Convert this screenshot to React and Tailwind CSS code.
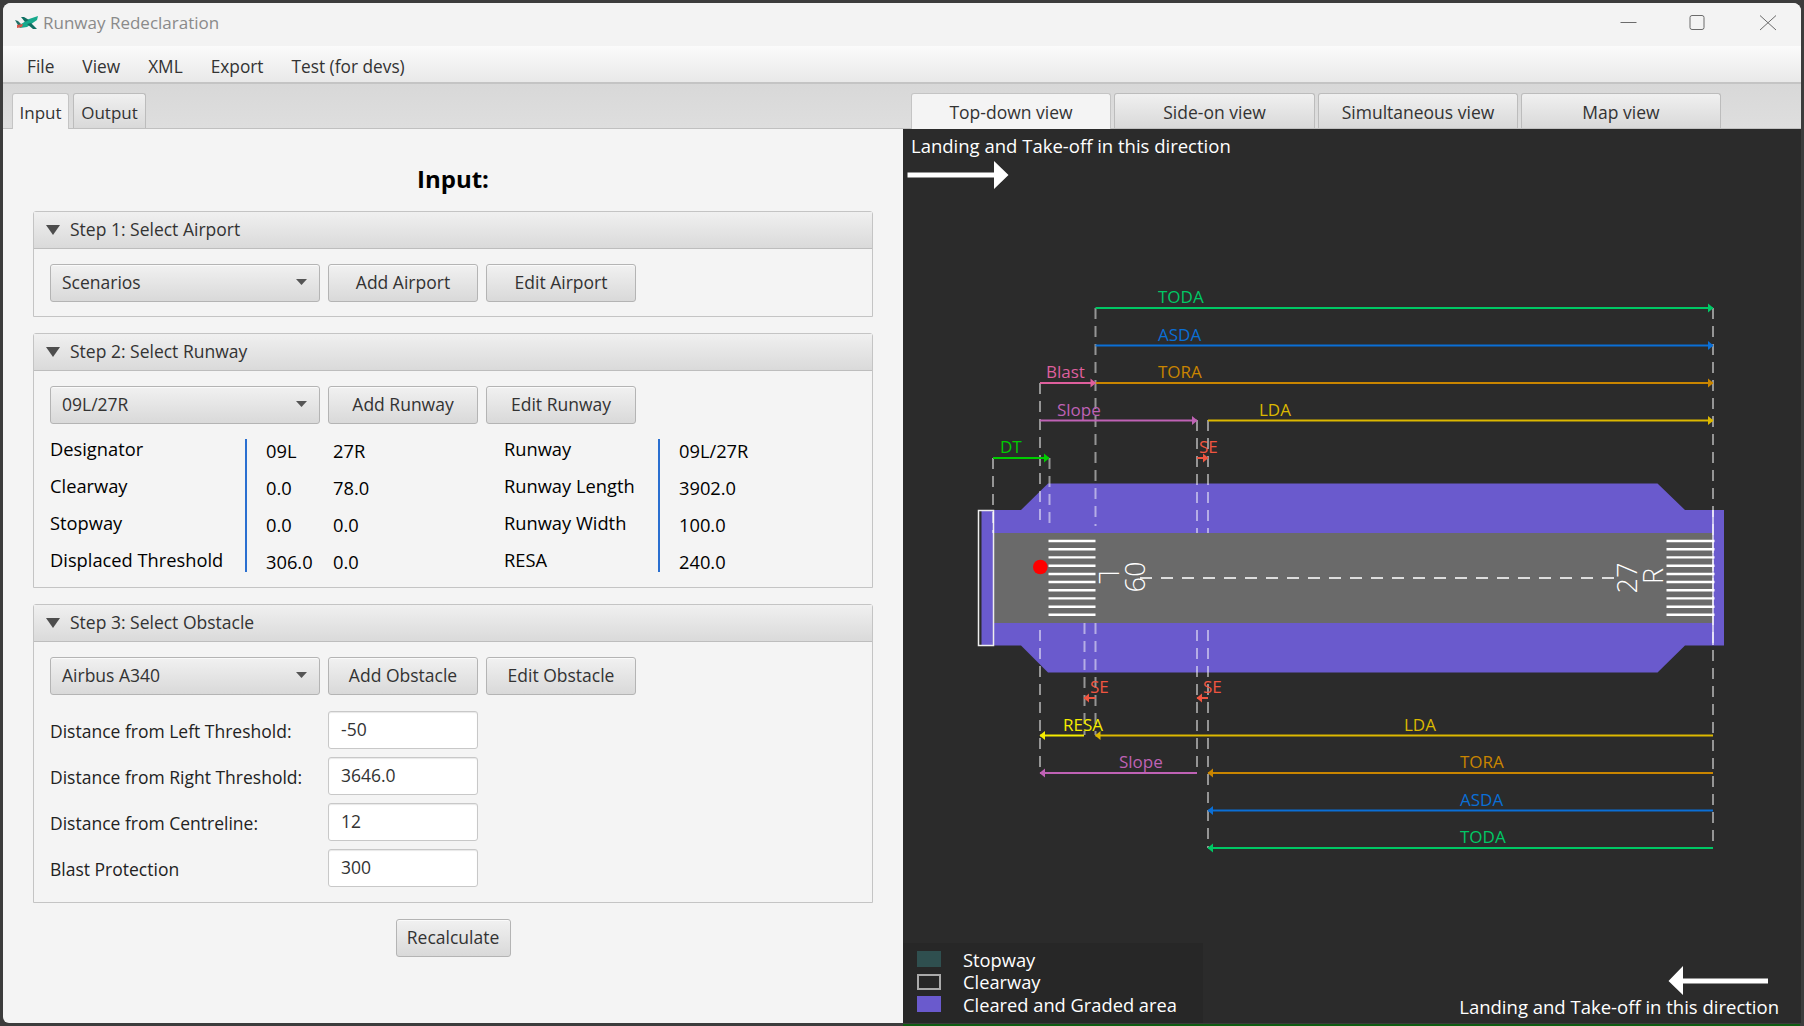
import React from "react";

const btn =
  "h-[38px] pb-[2px] rounded-[3px] border border-[#b4b4b4] bg-gradient-to-b from-[#f1f1f1] to-[#d9d9d9] text-[#333] flex items-center justify-center shadow-[inset_0_1px_0_#fafafa]";

function Combo({ label }) {
  return (
    <div className={`${btn} w-[270px] !justify-between pl-[11px] pr-[12px]`}>
      <span>{label}</span>
      <svg width="11" height="6" viewBox="0 0 11 6">
        <polygon points="0,0 11,0 5.5,6" fill="#555" />
      </svg>
    </div>
  );
}

function Controls({ combo, a, b }) {
  return (
    <div className="flex gap-[8px]">
      <Combo label={combo} />
      <div className={`${btn} w-[150px]`}>{a}</div>
      <div className={`${btn} w-[150px]`}>{b}</div>
    </div>
  );
}

function Pane({ title, pad = "pb-[15px]", children }) {
  return (
    <div className="border border-[#c4c4c4] rounded-t-[3px]">
      <div className="h-[36px] flex items-center pl-[12px] gap-[10px] border-b border-[#bdbdbd] bg-gradient-to-b from-[#f0f0f0] to-[#dadada] text-[#333] box-content">
        <svg width="14" height="10" viewBox="0 0 14 10">
          <polygon points="0,0 14,0 7,10" fill="#4d4d4d" />
        </svg>
        <span className="pb-[2px]">{title}</span>
      </div>
      <div className={`pl-[16px] pt-[15px] ${pad}`}>{children}</div>
    </div>
  );
}

function Col({ items, className, lead = "leading-[20px]" }) {
  return (
    <div className={`flex flex-col gap-[15px] text-black text-[18.3px] ${className}`}>
      {items.map((t, i) => (
        <div key={i} className={`h-[22px] ${lead}`}>
          {t}
        </div>
      ))}
    </div>
  );
}

function Field({ label, value }) {
  return (
    <div className="flex items-center h-[38px]">
      <div className="w-[278px] text-[#222] pt-[2px]">{label}</div>
      <div className="w-[150px] h-[38px] pb-[2px] rounded-[3px] border border-[#c8c8c8] bg-white pl-[12px] flex items-center text-[#333] shadow-[inset_0_1px_1px_#e8e8e8]">
        {value}
      </div>
    </div>
  );
}

const GREEN = "#00c765";
const BLUE = "#0a6fd6";
const ORANGE = "#c98500";
const PINK = "#df5f9d";
const VIOLET = "#bf62b5";
const YELLOW = "#dcb800";
const RED = "#ef5540";

// x1, x2, y, colour, arrow side, label, label x
const spans = [
  [1095.5, 1713, 308, GREEN, "r", "TODA", 1158],
  [1095.5, 1713, 345.5, BLUE, "r", "ASDA", 1158],
  [1095.5, 1713, 383, ORANGE, "r", "TORA", 1158],
  [1040, 1095.5, 383, PINK, "r", "Blast", 1046],
  [1040, 1197, 420.5, VIOLET, "r", "Slope", 1057],
  [1208, 1713, 420.5, YELLOW, "r", "LDA", 1259],
  [993, 1049, 458, "#00cc00", "r", "DT", 1000],
  [1197, 1208, 458, RED, "r", "SE", 1199],
  [1084, 1095.5, 698, RED, "l", "SE", 1090],
  [1197, 1208, 698, RED, "l", "SE", 1203],
  [1040, 1084, 735.5, "#f5ec00", "l", "RESA", 1063],
  [1095.5, 1713, 735.5, YELLOW, "l", "LDA", 1404],
  [1040, 1197, 773, VIOLET, "l", "Slope", 1119],
  [1208, 1713, 773, ORANGE, "l", "TORA", 1460],
  [1208, 1713, 810.5, BLUE, "l", "ASDA", 1460],
  [1208, 1713, 848, GREEN, "l", "TODA", 1460],
];

// x, y1, y2
const dashes = [
  [993, 458, 533],
  [1040, 383, 526],
  [1049.5, 458, 526],
  [1095.5, 308, 526],
  [1197, 420, 533],
  [1208, 420, 533],
  [1713, 308, 848],
  [1040, 630, 773],
  [1084.5, 623, 735],
  [1095.5, 623, 735],
  [1197, 630, 773],
  [1208, 630, 848],
];

const stripes = [541, 549.3, 557.4, 565.7, 574, 582, 590.3, 598.4, 606.7, 614.8];

function Diagram() {
  return (
    <svg className="absolute inset-0" width="898" height="894" viewBox="903 129 898 894">
      <polygon
        points="981.5,510 1021,510 1048,483.5 1657.5,483.5 1685,510 1724,510 1724,645.5 1685,645.5 1657.5,672.5 1048,672.5 1021,645.5 981.5,645.5"
        fill="#6a5acd"
      />
      <rect x="993.5" y="533" width="719.5" height="90" fill="#6a6a6a" />
      <rect x="978.5" y="510.5" width="15" height="135" fill="none" stroke="#eee" strokeWidth="1.5" />
      <line x1="1713" x2="1713" y1="510" y2="645" stroke="#e8e4f8" strokeWidth="1.5" />
      {stripes.map((y) => (
        <g key={y} stroke="#fff" strokeWidth="2.4">
          <line x1="1048.5" x2="1095.5" y1={y} y2={y} />
          <line x1="1666.5" x2="1714.5" y1={y} y2={y} />
        </g>
      ))}
      <line x1="1140" x2="1614" y1="578" y2="578" stroke="#ddd" strokeWidth="2" strokeDasharray="12 9" />
      <circle cx="1040.3" cy="567" r="7.3" fill="#ff0000" />
      <g fill="#fff" fontFamily='"Open Sans", sans-serif' fontSize="27" fontWeight="300" textAnchor="middle">
        <text transform="translate(1099 577) rotate(90)">L</text>
        <text transform="translate(1125 577) rotate(90)">09</text>
        <text transform="translate(1637 578) rotate(-90)">27</text>
        <text transform="translate(1663 576) rotate(-90)">R</text>
      </g>
      {dashes.map(([x, y1, y2], i) => (
        <line
          key={i}
          x1={x}
          x2={x}
          y1={y1}
          y2={y2}
          stroke="#fff"
          strokeOpacity="0.5"
          strokeWidth="2"
          strokeDasharray="11 7"
        />
      ))}
      {spans.map(([x1, x2, y, c, side, label, lx], i) => (
        <g key={i}>
          <line x1={x1} x2={x2} y1={y} y2={y} stroke={c} strokeWidth="2" />
          {side === "r" ? (
            <polygon points={`${x2 + 0.5},${y} ${x2 - 5},${y - 4.5} ${x2 - 5},${y + 4.5}`} fill={c} />
          ) : (
            <polygon points={`${x1 - 0.5},${y} ${x1 + 5},${y - 4.5} ${x1 + 5},${y + 4.5}`} fill={c} />
          )}
          <text x={lx} y={y - 5} fill={c} fontFamily='"Open Sans", sans-serif' fontSize="17">
            {label}
          </text>
        </g>
      ))}
      <polygon
        points="907.5,172.5 994,172.5 994,161 1008.5,175 994,189 994,177.5 907.5,177.5"
        fill="#fff"
      />
      <polygon
        points="1768,978.5 1683,978.5 1683,966 1668.5,981 1683,995 1683,983.5 1768,983.5"
        fill="#fff"
      />
    </svg>
  );
}

export default function App() {
  return (
    <div
      className="relative w-[1804px] h-[1026px] bg-[#3c3c3c] p-[3px] overflow-hidden text-[17.5px]"
      style={{ fontFamily: '"Open Sans", "Noto Sans", sans-serif' }}
    >
      <div className="w-full h-full flex flex-col rounded-t-[8px] rounded-bl-[6px] overflow-hidden bg-[#f4f4f4]">
        {/* title bar */}
        <div className="h-[43px] shrink-0 bg-[#f3f3f3] flex items-center pb-[3px]">
          <svg className="ml-[12px] mr-[4px]" width="24" height="14" viewBox="0 0 24 14">
            <polygon points="0,4 3,5 7,9 4,11" fill="#1f6f66" />
            <polygon points="3,10 14,3 23,0 22,4 12,11 5,12" fill="#17a98c" />
            <polygon points="6,1 9,1 14,4 10,6" fill="#0f6f62" />
            <polygon points="12,8 16,7 22,13 18,13" fill="#0f6f62" />
            <polygon points="2,9 8,8 7,11 2,12" fill="#d9554a" />
          </svg>
          <span className="text-[#8a8a8a] text-[17px]">Runway Redeclaration</span>
          <svg className="ml-auto mr-[24px]" width="157" height="16" viewBox="0 0 157 16" fill="none" stroke="#6b6b6b" strokeWidth="1">
            <line x1="0.5" x2="16.5" y1="7.5" y2="7.5" />
            <rect x="70" y="0.5" width="14" height="14" rx="2" />
            <line x1="140" x2="156" y1="0.5" y2="15" />
            <line x1="156" x2="140" y1="0.5" y2="15" />
          </svg>
        </div>

        {/* menu bar */}
        <div className="h-[38px] shrink-0 flex items-center gap-[28px] pl-[24px] pt-[5px] text-[#333] text-[17.3px] border-b-2 border-[#c4c4c4] bg-gradient-to-b from-[#fbfbfb] to-[#e9e9e9]">
          <span>File</span>
          <span>View</span>
          <span>XML</span>
          <span>Export</span>
          <span>Test (for devs)</span>
        </div>

        <div className="flex-1 flex min-h-0">
          {/* input side */}
          <div className="w-[900px] shrink-0 flex flex-col">
            <div className="h-[45px] shrink-0 flex items-end gap-[4px] pl-[9px] bg-gradient-to-b from-[#d8d8d8] to-[#dedede] border-b border-[#c0c0c0] text-[17px]">
              <div className="w-[57px] h-[36px] -mb-px pt-[2px] flex items-center justify-center rounded-t-[3px] border border-b-0 border-[#c4c4c4] bg-[#f4f4f4] text-[#333]">
                Input
              </div>
              <div className="w-[73px] h-[35px] pt-[3px] flex items-center justify-center rounded-t-[3px] border border-b-0 border-[#bcbcbc] bg-gradient-to-b from-[#f0f0f0] to-[#d9d9d9] text-[#333]">
                Output
              </div>
            </div>

            <div className="px-[30px]">
              <h1 className="h-[82px] pt-[34px] leading-[32px] text-center font-bold text-[24px] text-black">Input:</h1>
              <div className="flex flex-col gap-[16px]">
                <Pane title="Step 1: Select Airport" pad="pb-[14px]">
                  <Controls combo="Scenarios" a="Add Airport" b="Edit Airport" />
                </Pane>

                <Pane title="Step 2: Select Runway">
                  <Controls combo="09L/27R" a="Add Runway" b="Edit Runway" />
                  <div className="flex mt-[15px]">
                    <Col className="w-[195px]" items={["Designator", "Clearway", "Stopway", "Displaced Threshold"]} />
                    <div className="w-[2px] bg-[#2a6fd0]" />
                    <Col className="w-[67px] ml-[19px]" lead="leading-[24px]" items={["09L", "0.0", "0.0", "306.0"]} />
                    <Col className="w-[171px]" lead="leading-[24px]" items={["27R", "78.0", "0.0", "0.0"]} />
                    <Col className="w-[154px]" items={["Runway", "Runway Length", "Runway Width", "RESA"]} />
                    <div className="w-[2px] bg-[#2a6fd0]" />
                    <Col className="ml-[19px]" lead="leading-[24px]" items={["09L/27R", "3902.0", "100.0", "240.0"]} />
                  </div>
                </Pane>

                <Pane title="Step 3: Select Obstacle">
                  <Controls combo="Airbus A340" a="Add Obstacle" b="Edit Obstacle" />
                  <div className="flex flex-col gap-[8px] mt-[16px]">
                    <Field label="Distance from Left Threshold:" value="-50" />
                    <Field label="Distance from Right Threshold:" value="3646.0" />
                    <Field label="Distance from Centreline:" value="12" />
                    <Field label="Blast Protection" value="300" />
                  </div>
                </Pane>
              </div>
              <div className="flex justify-center mt-[16px]">
                <div className={`${btn} w-[115px]`}>Recalculate</div>
              </div>
            </div>
          </div>

          {/* view side */}
          <div className="flex-1 flex flex-col min-w-0">
            <div className="h-[45px] shrink-0 flex items-end gap-[3px] pl-[8px] bg-gradient-to-b from-[#d8d8d8] to-[#dedede] border-b border-[#c0c0c0] text-[#333]">
              <div className="w-[200px] h-[36px] -mb-px pt-[2px] flex items-center justify-center rounded-t-[3px] border border-b-0 border-[#c4c4c4] bg-[#f4f4f4]">
                Top-down view
              </div>
              <div className="w-[201px] h-[35px] pt-[3px] flex items-center justify-center rounded-t-[3px] border border-b-0 border-[#bcbcbc] bg-gradient-to-b from-[#f0f0f0] to-[#d9d9d9]">
                Side-on view
              </div>
              <div className="w-[200px] h-[35px] pt-[3px] flex items-center justify-center rounded-t-[3px] border border-b-0 border-[#bcbcbc] bg-gradient-to-b from-[#f0f0f0] to-[#d9d9d9]">
                Simultaneous view
              </div>
              <div className="w-[200px] h-[35px] pt-[3px] flex items-center justify-center rounded-t-[3px] border border-b-0 border-[#bcbcbc] bg-gradient-to-b from-[#f0f0f0] to-[#d9d9d9]">
                Map view
              </div>
            </div>

            <div className="flex-1 relative bg-[#2b2b2b] text-white text-[18.5px]">
              <Diagram />
              <div className="absolute left-[8px] top-[5px] leading-[24px]">Landing and Take-off in this direction</div>
              <div className="absolute right-[22px] bottom-[4px] leading-[24px]">Landing and Take-off in this direction</div>
              <div className="absolute left-0 bottom-0 w-[300px] h-[80px] bg-[#272727] pl-[14px] pt-[5px] flex flex-col text-[18.3px]">
                <div className="flex items-center h-[22.5px] gap-[22px]">
                  <div className="w-[24px] h-[16px] bg-[#2f4f4f]" />
                  <span>Stopway</span>
                </div>
                <div className="flex items-center h-[22.5px] gap-[22px]">
                  <div className="w-[24px] h-[16px] border-2 border-[#aaa]" />
                  <span>Clearway</span>
                </div>
                <div className="flex items-center h-[22.5px] gap-[22px]">
                  <div className="w-[24px] h-[16px] bg-[#6a5acd]" />
                  <span>Cleared and Graded area</span>
                </div>
              </div>
            </div>
          </div>
        </div>
      </div>
      <div className="absolute left-[903px] bottom-0 h-[2px] w-[897px] bg-[#0f5c12]" />
    </div>
  );
}
